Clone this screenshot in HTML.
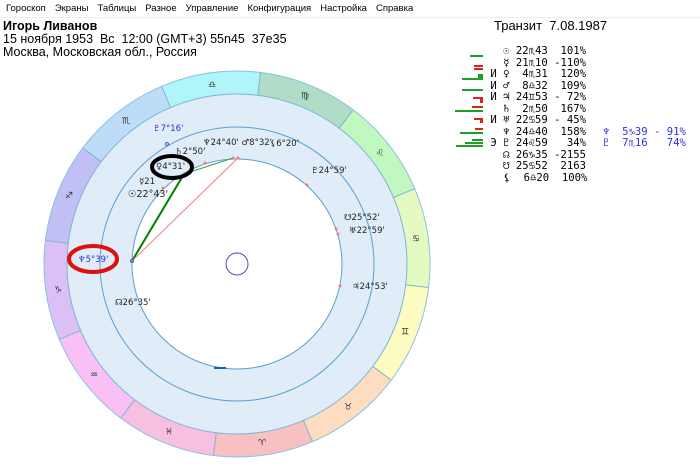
<!DOCTYPE html>
<html style="overflow:hidden"><head><meta charset="utf-8"><style>
html,body{margin:0;width:700px;height:471px;overflow:hidden}
body{background:#fff;position:relative;font-family:"Liberation Sans","DejaVu Sans",sans-serif;color:#000}
.menu{position:absolute;top:0;left:0;width:700px;height:17px;border-bottom:1px solid #eee;font-size:9.5px;line-height:17px}
.menu span{margin-left:6px;margin-right:3px}
.t{position:absolute;white-space:nowrap}
.tab{position:absolute;left:0;top:0;font-family:"DejaVu Sans Mono","Liberation Mono",monospace;font-size:10.6px;}
.row{position:absolute;white-space:pre;line-height:11px}
</style></head><body>
<div class="menu"><span>Гороскоп</span><span>Экраны</span><span>Таблицы</span><span>Разное</span><span>Управление</span><span>Конфигурация</span><span>Настройка</span><span>Справка</span></div>
<div class="t" style="left:3px;top:19px;font-size:12.5px;font-weight:bold">Игорь Ливанов</div>
<div class="t" style="left:3px;top:32px;font-size:12.5px">15 ноября 1953&nbsp; Вс&nbsp; 12:00 (GMT+3) 55n45&nbsp; 37e35</div>
<div class="t" style="left:3px;top:45px;font-size:12.5px">Москва, Московская обл., Россия</div>
<div class="t" style="left:494px;top:18px;font-size:13px">Транзит&nbsp; 7.08.1987</div>

<svg width="700" height="471" style="position:absolute;left:0;top:0;overflow:hidden">
<g fill="none" stroke-width="23">
<circle cx="237" cy="264" r="181.5" stroke="#dcc0f5" stroke-dasharray="95.03 1200" transform="rotate(-203 237 264)"/>
<circle cx="237" cy="264" r="181.5" stroke="#f8c0f5" stroke-dasharray="95.03 1200" transform="rotate(-233 237 264)"/>
<circle cx="237" cy="264" r="181.5" stroke="#f8c0e0" stroke-dasharray="95.03 1200" transform="rotate(-263 237 264)"/>
<circle cx="237" cy="264" r="181.5" stroke="#f8c0c0" stroke-dasharray="95.03 1200" transform="rotate(-293 237 264)"/>
<circle cx="237" cy="264" r="181.5" stroke="#fddcc0" stroke-dasharray="95.03 1200" transform="rotate(-323 237 264)"/>
<circle cx="237" cy="264" r="181.5" stroke="#fcfcc0" stroke-dasharray="95.03 1200" transform="rotate(-353 237 264)"/>
<circle cx="237" cy="264" r="181.5" stroke="#e4fac0" stroke-dasharray="95.03 1200" transform="rotate(-23 237 264)"/>
<circle cx="237" cy="264" r="181.5" stroke="#c0f8c0" stroke-dasharray="95.03 1200" transform="rotate(-53 237 264)"/>
<circle cx="237" cy="264" r="181.5" stroke="#b0dcc8" stroke-dasharray="95.03 1200" transform="rotate(-83 237 264)"/>
<circle cx="237" cy="264" r="181.5" stroke="#b0f5fa" stroke-dasharray="95.03 1200" transform="rotate(-113 237 264)"/>
<circle cx="237" cy="264" r="181.5" stroke="#bcdcf8" stroke-dasharray="95.03 1200" transform="rotate(-143 237 264)"/>
<circle cx="237" cy="264" r="181.5" stroke="#c0c0f5" stroke-dasharray="95.03 1200" transform="rotate(-173 237 264)"/>
</g>
<g stroke="#7ab4d8" stroke-width="1">
<line x1="407" y1="264" x2="430" y2="264" transform="rotate(-173 237 264)"/>
<line x1="407" y1="264" x2="430" y2="264" transform="rotate(-203 237 264)"/>
<line x1="407" y1="264" x2="430" y2="264" transform="rotate(-233 237 264)"/>
<line x1="407" y1="264" x2="430" y2="264" transform="rotate(-263 237 264)"/>
<line x1="407" y1="264" x2="430" y2="264" transform="rotate(-293 237 264)"/>
<line x1="407" y1="264" x2="430" y2="264" transform="rotate(-323 237 264)"/>
<line x1="407" y1="264" x2="430" y2="264" transform="rotate(-353 237 264)"/>
<line x1="407" y1="264" x2="430" y2="264" transform="rotate(-23 237 264)"/>
<line x1="407" y1="264" x2="430" y2="264" transform="rotate(-53 237 264)"/>
<line x1="407" y1="264" x2="430" y2="264" transform="rotate(-83 237 264)"/>
<line x1="407" y1="264" x2="430" y2="264" transform="rotate(-113 237 264)"/>
<line x1="407" y1="264" x2="430" y2="264" transform="rotate(-143 237 264)"/>
</g>
<circle cx="237" cy="264" r="193" fill="none" stroke="#8cc0e0"/>
<circle cx="237" cy="264" r="170" fill="#e0ecf8" stroke="#7ab4d8"/>
<circle cx="237" cy="264" r="137" fill="none" stroke="#5aa0d0"/>
<circle cx="237" cy="264" r="105" fill="#fff" stroke="#5aa0d0"/>
<circle cx="237" cy="264" r="11" fill="none" stroke="#5050c0"/>
<g font-family="DejaVu Sans" font-size="9" fill="#333" text-anchor="middle" dominant-baseline="middle">
<text x="58" y="290">♑</text><text x="94" y="375">♒</text><text x="169" y="432">♓</text><text x="262" y="443">♈</text>
<text x="348" y="407">♉</text><text x="405" y="332">♊</text><text x="416" y="239">♋</text><text x="380" y="153">♌</text>
<text x="305" y="96">♍</text><text x="212" y="85">♎</text><text x="126" y="121">♏</text><text x="69" y="196">♐</text>
</g>
<line x1="132" y1="261" x2="184" y2="174" stroke="#008000" stroke-width="2"/>
<line x1="184" y1="174" x2="233" y2="158" stroke="#40a040" stroke-width="1"/>
<line x1="132" y1="261" x2="238" y2="158" stroke="#f08080" stroke-width="1"/>
<g fill="#f08080"><circle cx="233" cy="158" r="1.5"/><circle cx="238" cy="158" r="1.5"/><circle cx="205" cy="163" r="1.5"/><circle cx="307" cy="185" r="1.5"/><circle cx="336" cy="229" r="1.5"/><circle cx="338" cy="234" r="1.5"/><circle cx="340" cy="286" r="1.5"/><circle cx="163" cy="188" r="1.5"/></g>
<circle cx="167" cy="144" r="1.5" fill="none" stroke="#5050e0"/>
<circle cx="132" cy="261" r="1.5" fill="none" stroke="#5050e0"/>
<rect x="214" y="367" width="12" height="2" fill="#1060c0"/>
<g font-family="DejaVu Sans" font-size="8.5" fill="#222">
<text x="175" y="154">♄2°50'</text>
<text x="203" y="145">♆24°40' ♂8°32'</text>
<text x="270" y="146">⚸6°20'</text>
<text x="156" y="169">♀4°31'</text>
<text x="139" y="184">☿21</text>
<text x="128" y="197" font-size="9.5">☉22°43'</text>
<text x="311" y="173">♇24°59'</text>
<text x="344" y="220">☋25°52'</text>
<text x="349" y="233">♅22°59'</text>
<text x="352" y="289">♃24°53'</text>
<text x="115" y="305">☊26°35'</text>
</g>
<g font-family="DejaVu Sans" font-size="8.5" fill="#3030d0">
<text x="153" y="131">♇7°16'</text>
<text x="78" y="262">♆5°39'</text>
</g>
<ellipse cx="172" cy="167" rx="20" ry="11" fill="none" stroke="#000" stroke-width="4"/>
<ellipse cx="93" cy="259" rx="24" ry="13" fill="none" stroke="#e01010" stroke-width="4"/>
<g>
<rect x="470" y="55" width="13" height="2" fill="#20a020"/>
<rect x="474" y="65" width="9" height="2" fill="#e02020"/><rect x="474" y="68" width="9" height="2" fill="#e02020"/>
<rect x="462" y="78" width="21" height="2" fill="#20a020"/><rect x="478" y="74" width="5" height="4" fill="#20a020"/>
<rect x="462" y="89" width="21" height="2" fill="#20a020"/>
<rect x="473" y="97" width="10" height="2" fill="#e02020"/><rect x="480" y="97" width="3" height="6" fill="#e02020"/>
<rect x="455" y="110" width="28" height="2" fill="#20a020"/><rect x="472" y="106" width="11" height="2" fill="#e02020"/>
<rect x="474" y="118" width="9" height="2" fill="#e02020"/><rect x="480" y="118" width="3" height="5" fill="#e02020"/>
<rect x="460" y="132" width="23" height="2" fill="#20a020"/><rect x="475" y="128" width="8" height="2" fill="#e02020"/>
<rect x="456" y="145" width="27" height="2" fill="#20a020"/><rect x="465" y="142" width="18" height="2" fill="#20a020"/><rect x="472" y="139" width="11" height="2" fill="#20a020"/>
</g>
</svg>
<div class="tab">
<div class="row" style="left:484px;top:46px">   ☉ 22♏43  101%</div>
<div class="row" style="left:484px;top:57.5px">   ☿ 21♏10 -110%</div>
<div class="row" style="left:484px;top:69px"> И ♀  4♏31  120%</div>
<div class="row" style="left:484px;top:80.5px"> И ♂  8♎32  109%</div>
<div class="row" style="left:484px;top:92px"> И ♃ 24♊53 - 72%</div>
<div class="row" style="left:484px;top:103.5px">   ♄  2♏50  167%</div>
<div class="row" style="left:484px;top:115px"> И ♅ 22♋59 - 45%</div>
<div class="row" style="left:484px;top:126.5px">   ♆ 24♎40  158%</div>
<div class="row" style="left:484px;top:138px"> Э ♇ 24♌59   34%</div>
<div class="row" style="left:484px;top:149.5px">   ☊ 26♑35 -2155</div>
<div class="row" style="left:484px;top:161px">   ☋ 25♋52  2163</div>
<div class="row" style="left:484px;top:172.5px">   ⚸  6♎20  100%</div>
<div class="row" style="left:603px;top:126.5px;color:#3030e0">♆  5♑39 - 91%</div>
<div class="row" style="left:603px;top:138px;color:#3030e0">♇  7♏16   74%</div>
</div>
</body></html>
